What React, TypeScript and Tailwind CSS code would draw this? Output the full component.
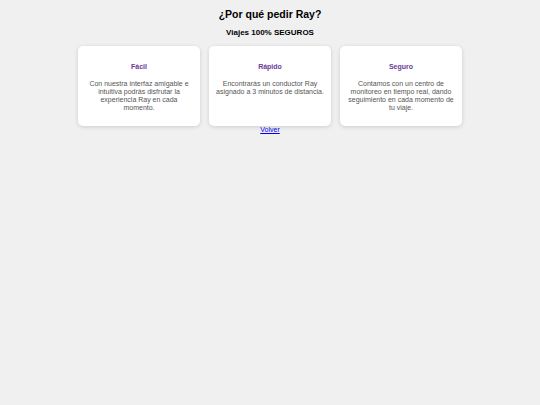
const cards = [
  {
    title: "Fácil",
    text: "Con nuestra interfaz amigable e intuitiva podrás disfrutar la experiencia Ray en cada momento.",
  },
  {
    title: "Rápido",
    text: "Encontrarás un conductor Ray asignado a 3 minutos de distancia.",
  },
  {
    title: "Seguro",
    text: "Contamos con un centro de monitoreo en tiempo real, dando seguimiento en cada momento de tu viaje.",
  },
];

export default function App() {
  return (
    <div className="min-h-[405px] bg-[#f0f0f0] font-['Liberation_Sans',Arial,sans-serif] text-black flex flex-col items-center pt-[8px]">
      <h1 className="text-[10.5px] font-bold leading-[13px]">¿Por qué pedir Ray?</h1>
      <h2 className="mt-[7px] text-[8px] font-bold leading-[10px]">Viajes 100% SEGUROS</h2>
      <div className="mt-[8px] flex gap-[9px] w-[384px]">
        {cards.map((c) => (
          <div
            key={c.title}
            className="w-[122px] h-[80px] bg-white rounded-[5px] shadow-[0_1px_4px_rgba(0,0,0,0.15)] px-[6px] pt-[17px] flex flex-col items-center text-center"
          >
            <h3 className="text-[7px] font-bold leading-[8px] text-[#6a3a9a]">{c.title}</h3>
            <p className="mt-[9px] text-[7px] leading-[8px] text-[#555]">{c.text}</p>
          </div>
        ))}
      </div>
      <a href="#" className="text-[7px] leading-[8px] text-[#0000ee] underline">
        Volver
      </a>
    </div>
  );
}
